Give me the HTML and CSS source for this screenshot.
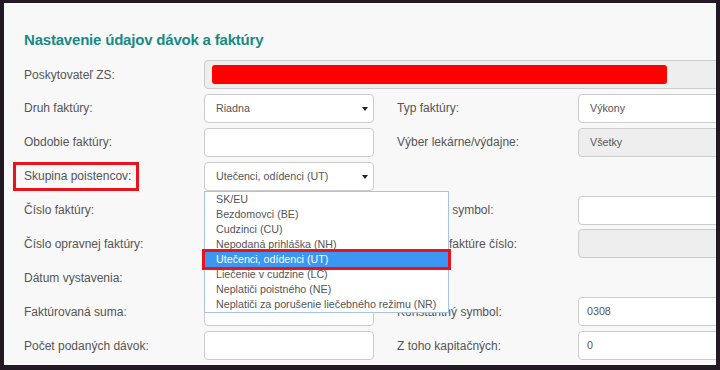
FILE: index.html
```html
<!DOCTYPE html>
<html lang="sk">
<head>
    <meta charset="UTF-8">
    <meta name="viewport" content="width=device-width, initial-scale=1.0">
    <title>Nastavenie údajov dávok a faktúry</title>
    <link rel="stylesheet" href="styles.css">
</head>
<body>
    <div class="screen">
        <div class="form">
            <h2 class="title">Nastavenie údajov dávok a faktúry</h2>

            <div class="row">
                <label class="lbl">Poskytovateľ ZS:</label>
                <div class="field wide disabled"><span class="redacted"></span></div>
            </div>

            <div class="row">
                <label class="lbl">Druh faktúry:</label>
                <div class="field select">Riadna<span class="caret"></span></div>
                <label class="lbl lbl-r">Typ faktúry:</label>
                <div class="field select">Výkony</div>
            </div>

            <div class="row">
                <label class="lbl">Obdobie faktúry:</label>
                <div class="field"></div>
                <label class="lbl lbl-r">Výber lekárne/výdajne:</label>
                <div class="field select disabled">Všetky</div>
            </div>

            <div class="row">
                <label class="lbl marked">Skupina poistencov:</label>
                <div class="dropdown-wrap">
                    <div class="field select">Utečenci, odídenci (UT)<span class="caret"></span></div>
                    <!-- open list of the select -->
                    <ul class="options">
                        <li>SK/EU</li>
                        <li>Bezdomovci (BE)</li>
                        <li>Cudzinci (CU)</li>
                        <li>Nepodaná prihláška (NH)</li>
                        <li class="selected">Utečenci, odídenci (UT)</li>
                        <li>Liečenie v cudzine (LC)</li>
                        <li>Neplatiči poistného (NE)</li>
                        <li>Neplatiči za porušenie liečebného režimu (NR)</li>
                    </ul>
                </div>
            </div>

            <div class="row">
                <label class="lbl">Číslo faktúry:</label>
                <div class="field"></div>
                <label class="lbl lbl-r">Variabilný symbol:</label>
                <div class="field"></div>
            </div>

            <div class="row">
                <label class="lbl">Číslo opravnej faktúry:</label>
                <div class="field"></div>
                <label class="lbl lbl-r">Oprava k faktúre číslo:</label>
                <div class="field disabled"></div>
            </div>

            <div class="row">
                <label class="lbl">Dátum vystavenia:</label>
                <div class="field"></div>
            </div>

            <div class="row">
                <label class="lbl">Faktúrovaná suma:</label>
                <div class="field"></div>
                <label class="lbl lbl-r">Konštantný symbol:</label>
                <div class="field">0308</div>
            </div>

            <div class="row">
                <label class="lbl">Počet podaných dávok:</label>
                <div class="field"></div>
                <label class="lbl lbl-r">Z toho kapitačných:</label>
                <div class="field">0</div>
            </div>
        </div>
    </div>
</body>
</html>
```

FILE: styles.css
```css
/* Base */
body {
    margin: 0;
    background: #211a24;
    font-family: "Liberation Sans", Arial, sans-serif;
    color: #555;
}

.screen {
    margin: 3px 4px 0 4px;
    width: 712px;
    height: 362px;
    background: #f8f8f8;
    overflow: hidden;
}

.form {
    padding: 27px 0 0 20px;
}

.title {
    margin: 0 0 10px 0;
    font-size: 15px;
    line-height: 20px;
    letter-spacing: -0.2px;
    font-weight: bold;
    color: #178a86;
}

/* Rows: label | field | label | field */
.row {
    display: grid;
    grid-template-columns: 180px 170px 204px 170px;
    align-items: center;
    height: 29px;
    margin-bottom: 4.9px;
}

.lbl {
    font-size: 12px;
    color: #555;
    white-space: nowrap;
}

.lbl-r {
    padding-left: 23px;
}

/* Highlighted label */
.lbl.marked {
    align-self: stretch;
    justify-self: start;
    display: flex;
    align-items: center;
    margin-left: -11px;
    padding: 0 5px 0 8px;
    border: 3px solid #e8131b;
    box-sizing: border-box;
}

/* Form fields */
.field {
    position: relative;
    box-sizing: border-box;
    height: 29px;
    padding: 0 8px;
    background: #fff;
    border: 1px solid #ccc;
    border-radius: 4px;
    font-size: 10.7px;
    line-height: 27px;
    color: #555;
    white-space: nowrap;
}
.field.select {
    padding-left: 11px;
}
.field.disabled {
    background: #eee;
}
.field.wide {
    grid-column: 2 / 5;
    padding-left: 7px;
    display: flex;
    align-items: center;
}

.redacted {
    display: block;
    width: 455px;
    height: 19px;
    background: #ff0000;
    border-radius: 3px;
}

.caret {
    position: absolute;
    right: 5px;
    top: 12px;
    width: 0;
    height: 0;
    border-left: 3px solid transparent;
    border-right: 3px solid transparent;
    border-top: 4px solid #222;
}

/* Open select list */
.dropdown-wrap {
    position: relative;
}

.options {
    position: absolute;
    top: 29px;
    left: 0;
    z-index: 5;
    width: 245px;
    margin: 0;
    padding: 0;
    list-style: none;
    box-sizing: border-box;
    background: #fff;
    border: 1px solid #a9c4e2;
}

.options li {
    height: 15px;
    padding-left: 11px;
    font-size: 10.7px;
    line-height: 15px;
    color: #555;
    white-space: nowrap;
}

.options li.selected {
    background: #3b97f3;
    color: #fff;
    outline: 3px solid #e8131b;
}
```
